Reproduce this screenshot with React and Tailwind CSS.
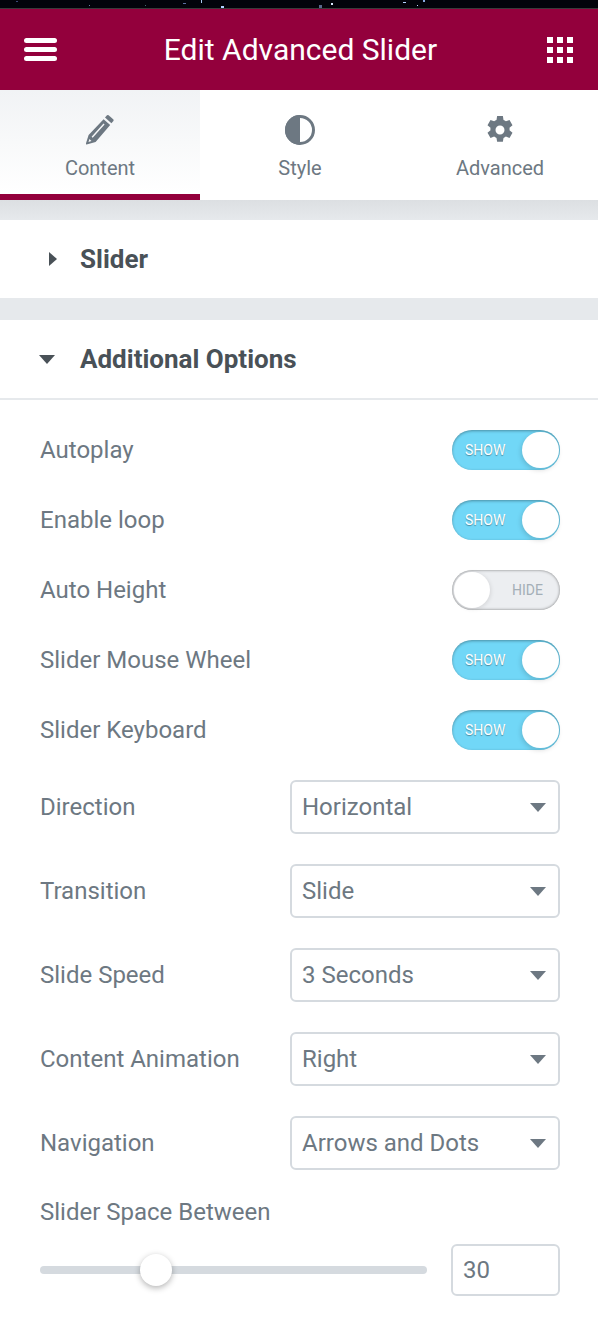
import React from "react";

const Toggle = ({ on }) => {
  if (on) {
    return (
      <div className="relative h-10 w-[108px] rounded-full bg-[#71d7f7] shadow-[inset_0_1px_3px_rgba(0,0,0,0.35)]">
        <span className="absolute left-[13px] top-[10px] text-[14px] leading-5 text-white [text-shadow:0_1px_1px_rgba(0,0,0,0.35)]">
          SHOW
        </span>
        <div className="absolute right-[1px] top-[2px] h-9 w-[37px] rounded-full bg-white shadow-[-1px_2px_5px_rgba(0,0,0,0.15)]" />
      </div>
    );
  }
  return (
    <div className="relative h-10 w-[108px] rounded-full bg-[#eceef1] shadow-[inset_0_0_3px_rgba(0,0,0,0.5)]">
      <span className="absolute right-[17px] top-[10px] text-[14px] leading-5 text-[#a4afb7]">
        HIDE
      </span>
      <div className="absolute left-[2px] top-[2px] h-9 w-9 rounded-full bg-white shadow-[1px_1px_4px_rgba(0,0,0,0.1)]" />
    </div>
  );
};

const ToggleRow = ({ label, on }) => (
  <div className="flex h-[70px] items-center justify-between">
    <span className="text-[24px] text-[#6d7882]">{label}</span>
    <Toggle on={on} />
  </div>
);

const SelectRow = ({ label, value }) => (
  <div className="flex h-[84px] items-center justify-between">
    <span className="text-[24px] text-[#6d7882]">{label}</span>
    <div className="flex h-[54px] w-[270px] items-center justify-between rounded-md border-2 border-[#d5dadf] pl-[10px] pr-[12px]">
      <span className="text-[24px] text-[#6d7882]">{value}</span>
      <svg width="16" height="9" viewBox="0 0 16 9">
        <path d="M0 0h16L8 9z" fill="#6d7882" />
      </svg>
    </div>
  </div>
);

const Tab = ({ label, active, children }) => (
  <div
    className={
      active
        ? "flex h-[110px] w-[200px] shrink-0 flex-col items-center border-b-[6px] border-[#93003c] bg-gradient-to-b from-[#f1f3f5] to-white pt-[25px]"
        : "flex h-[110px] w-[200px] shrink-0 flex-col items-center bg-white pt-[25px]"
    }
  >
    <div className="flex h-[30px] items-center justify-center">{children}</div>
    <span className="mt-[9px] text-[20px] leading-7 text-[#6d7882]">{label}</span>
  </div>
);

const App = () => {
  return (
    <div className="h-[1322px] w-[598px] overflow-hidden bg-white font-['Roboto',sans-serif]">
      {/* strip of the page behind the panel */}
      <svg width="598" height="8" viewBox="0 0 598 8" className="block bg-[#02030a]">
        <rect x="16" y="1" width="2" height="1" fill="#3c4a78" />
        <rect x="89" y="5" width="1" height="1" fill="#6a80a8" />
        <rect x="145" y="5" width="1" height="1" fill="#3f6a70" />
        <rect x="183" y="3" width="3" height="1" fill="#5a6ea0" />
        <rect x="201" y="0" width="1" height="3" fill="#a8c8f0" />
        <rect x="221" y="6" width="3" height="2" fill="#b0d0ff" />
        <rect x="319" y="5" width="3" height="3" fill="#58688c" />
        <rect x="331" y="3" width="2" height="2" fill="#d8e8ff" />
        <rect x="403" y="2" width="3" height="1" fill="#b0d0ff" />
        <rect x="417" y="5" width="1" height="1" fill="#c0d8ff" />
        <rect x="423" y="0" width="2" height="2" fill="#88a8e0" />
      </svg>
      <div className="grid h-[82px] grid-cols-[1fr_auto_1fr] items-center border-t border-[#3a3a3a] bg-[#93003c] pl-6 pr-[25px]">
        <svg width="33" height="24" viewBox="0 0 33 24">
          <rect x="0" y="0" width="33" height="5" rx="2.5" fill="#fff" />
          <rect x="0" y="9" width="33" height="5" rx="2.5" fill="#fff" />
          <rect x="0" y="18" width="33" height="5" rx="2.5" fill="#fff" />
        </svg>
        <span className="ml-1 text-[30px] text-white">Edit Advanced Slider</span>
        <svg width="26" height="26" viewBox="0 0 26 26" fill="#fff" className="justify-self-end">
          <rect x="0" y="0" width="6" height="6" />
          <rect x="10" y="0" width="6" height="6" />
          <rect x="20" y="0" width="6" height="6" />
          <rect x="0" y="10" width="6" height="6" />
          <rect x="10" y="10" width="6" height="6" />
          <rect x="20" y="10" width="6" height="6" />
          <rect x="0" y="20" width="6" height="6" />
          <rect x="10" y="20" width="6" height="6" />
          <rect x="20" y="20" width="6" height="6" />
        </svg>
      </div>

      <div className="flex">
        <Tab label="Content" active>
          <svg width="28" height="30" viewBox="0 0 28 30" fill="#6d7882">
            <path d="M19 2.5l2-2.2q.8-.6 1.6 0l4.6 4q.8.8.2 1.6l-2 2.3z" />
            <path fillRule="evenodd" d="M17.6 4.2l6.6 5.8L9.6 27 .6 29.4q-.9.1-.7-.9L2.6 20zM17.5 8.5L5.6 21.7l1.1 1L18.6 9.5zM3.4 24l-.9 3 3-.9z" />
          </svg>
        </Tab>
        <Tab label="Style">
          <svg width="30" height="30" viewBox="0 0 30 30">
            <circle cx="15" cy="15" r="13.5" fill="#fff" stroke="#6d7882" strokeWidth="3" />
            <path d="M15 0a15 15 0 0 0 0 30z" fill="#6d7882" />
          </svg>
        </Tab>
        <Tab label="Advanced">
          <svg viewBox="0 0 24 24" fill="#6d7882" className="h-[30px] w-[30px]">
            <path fillRule="evenodd" d="M14.3 0.8l.5 3.1c.7.3 1.3.6 1.9 1.1l2.9-1.1 2.4 4.2-2.4 2c.1.7.1 1.4 0 2.1l2.4 1.9-2.4 4.2-2.9-1.1c-.6.5-1.2.8-1.9 1.1l-.5 3.1H9.7l-.5-3.1c-.7-.3-1.3-.6-1.9-1.1l-2.9 1.1-2.4-4.2 2.4-1.9c-.1-.7-.1-1.4 0-2.1l-2.4-2 2.4-4.2 2.9 1.1c.6-.5 1.2-.8 1.9-1.1l.5-3.1zM12 8.4a3.6 3.6 0 1 0 0 7.2 3.6 3.6 0 0 0 0-7.2z" />
          </svg>
        </Tab>
      </div>

      <div className="h-5 bg-gradient-to-b from-[#dcdfe2] to-[#e6e9ec]" />

      <div className="flex h-[78px] items-center bg-white">
        <svg width="8" height="14" viewBox="0 0 8 14" className="ml-[49px]">
          <path d="M0 0l8 7-8 7z" fill="#495157" />
        </svg>
        <span className="ml-[23px] text-[26px] font-bold text-[#495157]">Slider</span>
      </div>

      <div className="h-[22px] bg-[#e6e9ec]" />

      <div className="flex h-[80px] items-center border-b-2 border-[#e6e9ec] bg-white">
        <svg width="16" height="9" viewBox="0 0 16 9" className="ml-[39px]">
          <path d="M0 0h16l-8 9z" fill="#495157" />
        </svg>
        <span className="ml-[25px] text-[26px] font-bold text-[#495157]">Additional Options</span>
      </div>

      <div className="pl-10 pr-[38px] pt-[15px]">
        <ToggleRow label="Autoplay" on />
        <ToggleRow label="Enable loop" on />
        <ToggleRow label="Auto Height" />
        <ToggleRow label="Slider Mouse Wheel" on />
        <ToggleRow label="Slider Keyboard" on />
        <SelectRow label="Direction" value="Horizontal" />
        <SelectRow label="Transition" value="Slide" />
        <SelectRow label="Slide Speed" value="3 Seconds" />
        <SelectRow label="Content Animation" value="Right" />
        <SelectRow label="Navigation" value="Arrows and Dots" />
        <div className="mt-[11px] text-[24px] leading-8 text-[#6d7882]">Slider Space Between</div>
        <div className="mt-4 flex items-center justify-between">
          <div className="relative h-2 w-[387px] rounded-full bg-[#d5dadf]">
            <div className="absolute left-[100px] top-[-12px] h-8 w-8 rounded-full bg-white shadow-[0_2px_6px_rgba(0,0,0,0.3)]" />
          </div>
          <div className="flex h-[52px] w-[109px] items-center rounded-md border-2 border-[#d5dadf] pl-[10px] text-[24px] text-[#6d7882]">
            30
          </div>
        </div>
      </div>
    </div>
  );
};

export default App;
